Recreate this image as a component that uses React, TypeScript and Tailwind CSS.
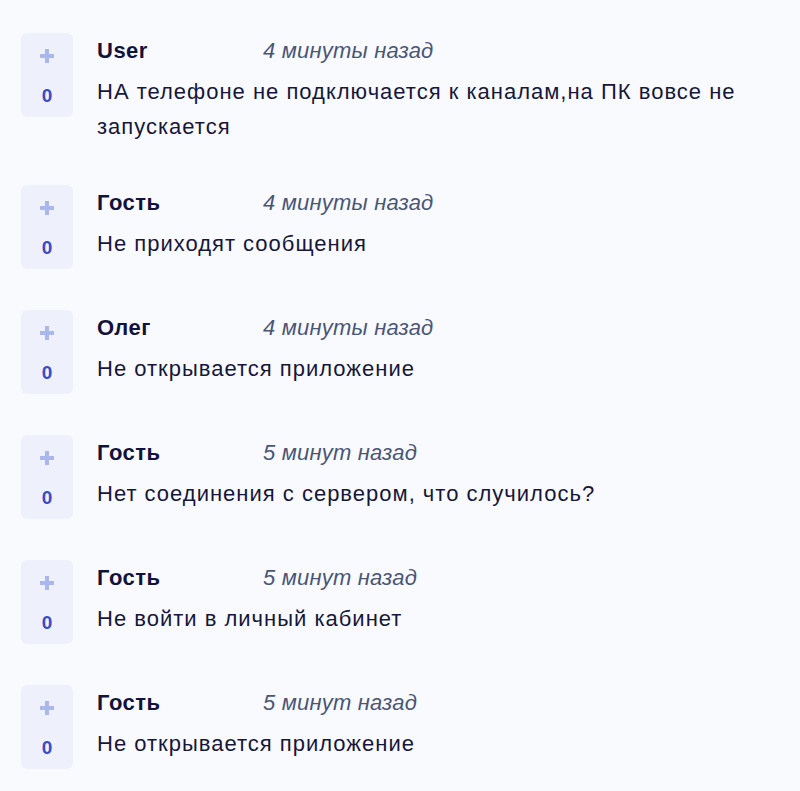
const comments = [
  { author: "User", time: "4 минуты назад", text: "НА телефоне не подключается к каналам,на ПК вовсе не запускается" },
  { author: "Гость", time: "4 минуты назад", text: "Не приходят сообщения" },
  { author: "Олег", time: "4 минуты назад", text: "Не открывается приложение" },
  { author: "Гость", time: "5 минут назад", text: "Нет соединения с сервером, что случилось?" },
  { author: "Гость", time: "5 минут назад", text: "Не войти в личный кабинет" },
  { author: "Гость", time: "5 минут назад", text: "Не открывается приложение" },
];

const VoteBox = () => (
  <div className="flex h-[84px] w-[52px] shrink-0 flex-col items-center rounded-md bg-[#eef1fb]">
    <svg width="16" height="16" viewBox="0 0 16 16" className="mt-[15px]">
      <path d="M6 1h4v5h5v4h-5v5H6v-5H1V6h5z" fill="#a9b8e8" />
    </svg>
    <span className="mt-[22px] text-[19px] font-bold leading-none text-[#3b4cc4]">0</span>
  </div>
);

export default function App() {
  return (
    <div
      className="min-h-[791px] bg-[#f9fafd] px-[21px] pt-[33px]"
      style={{ fontFamily: '"Liberation Sans", Arial, sans-serif' }}
    >
      <ul className="flex flex-col gap-[41px]">
        {comments.map((c, i) => (
          <li key={i} className="flex gap-6">
            <VoteBox />
            <div className="min-w-0 flex-1 pr-10">
              <div className="flex h-[34px] items-center">
                <span className="w-[166px] text-[22px] font-bold tracking-[0.5px] text-[#12133a]">{c.author}</span>
                <span className="text-[22px] italic tracking-[0.2px] text-[#4a5677]">{c.time}</span>
              </div>
              <p className="mt-[7px] text-[22px] leading-[35px] tracking-[1px] text-[#16173a]">{c.text}</p>
            </div>
          </li>
        ))}
      </ul>
    </div>
  );
}
